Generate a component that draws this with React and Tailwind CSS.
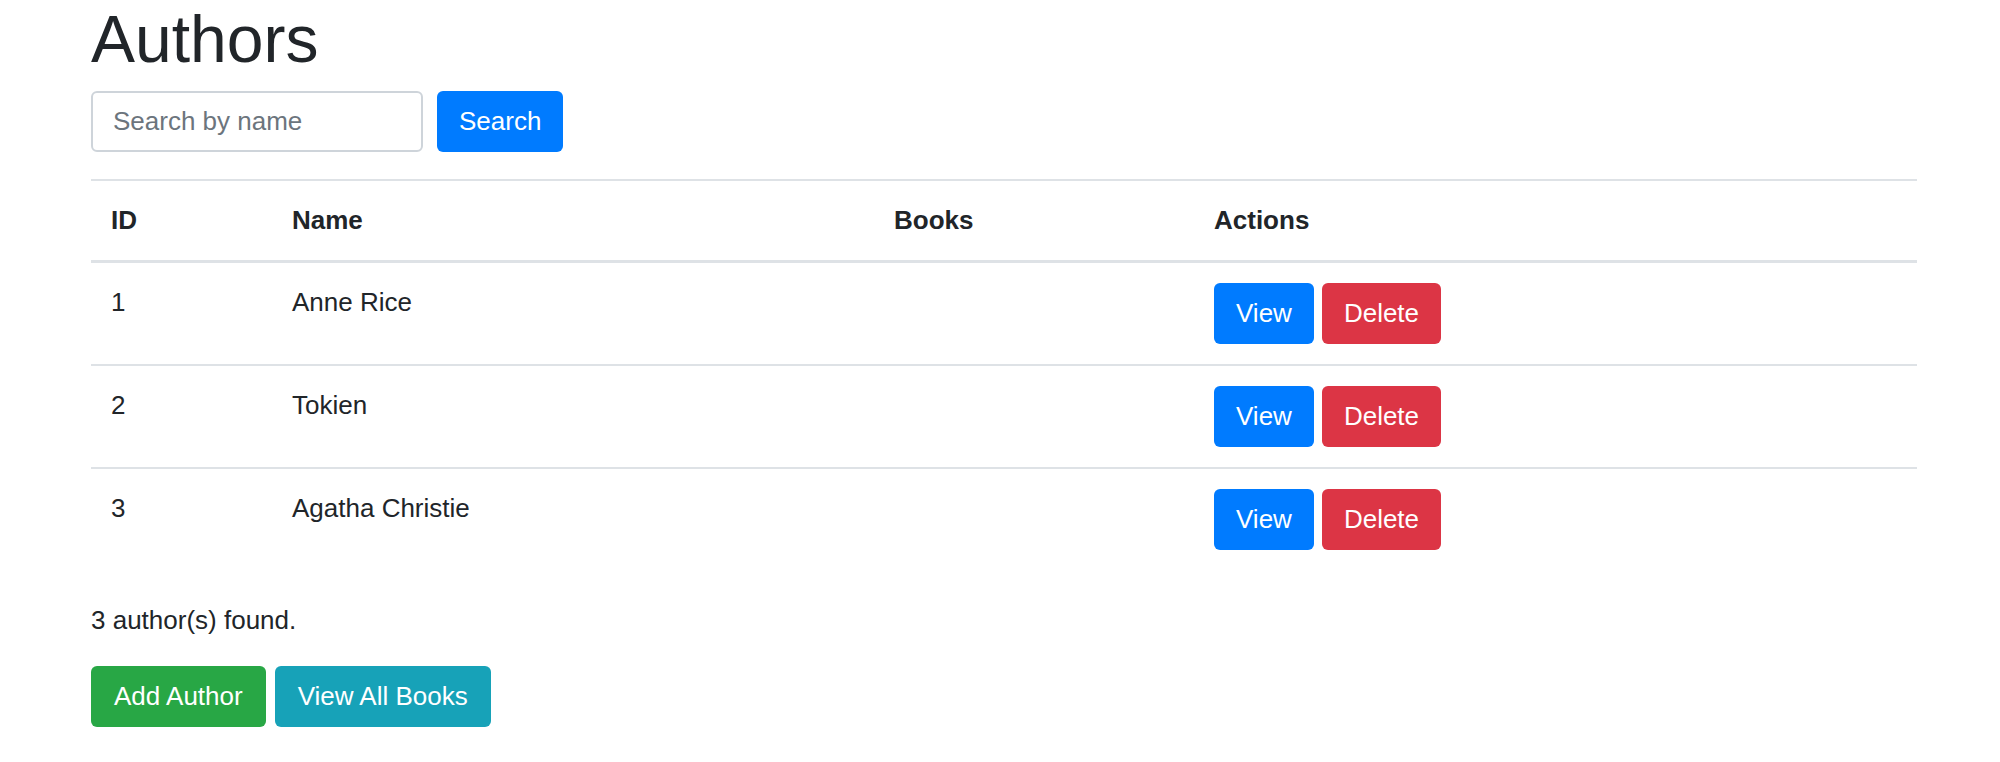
import React from "react";

const authors = [
  { id: 1, name: "Anne Rice" },
  { id: 2, name: "Tokien" },
  { id: 3, name: "Agatha Christie" },
];

const btn =
  "inline-flex items-center h-[61px] px-[21px] border border-transparent rounded-[6px] text-white text-[26px] leading-[39px]";

const AuthorList = () => {
  return (
    <div
      className="min-h-screen bg-white text-[#212529] pl-[91px] pr-[83px]"
      style={{ fontFamily: '"Liberation Sans", Arial, sans-serif' }}
    >
      <h1 className="text-[66px] leading-[78px] font-medium mb-[13px]">Authors</h1>

      <form className="flex items-center gap-[14px]" onSubmit={(e) => e.preventDefault()}>
        <input
          type="text"
          placeholder="Search by name"
          className="w-[332px] h-[61px] px-[20px] border-2 border-[#ced4da] rounded-[6px] text-[26px] placeholder:text-[#6c757d] outline-none"
        />
        <button type="submit" className={`${btn} bg-[#007bff]`}>
          Search
        </button>
      </form>

      <table className="w-full mt-[27px] border-collapse text-[26px] leading-[39px]">
        <thead>
          <tr className="text-left">
            <th className="w-[181px] p-[20px] font-bold border-t-2 border-b-[3px] border-[#dee2e6]">ID</th>
            <th className="w-[602px] p-[20px] font-bold border-t-2 border-b-[3px] border-[#dee2e6]">Name</th>
            <th className="w-[320px] p-[20px] font-bold border-t-2 border-b-[3px] border-[#dee2e6]">Books</th>
            <th className="p-[20px] font-bold border-t-2 border-b-[3px] border-[#dee2e6]">Actions</th>
          </tr>
        </thead>
        <tbody>
          {authors.map((a) => (
            <tr key={a.id}>
              <td className="p-[20px] align-top border-t-2 border-[#dee2e6]">{a.id}</td>
              <td className="p-[20px] align-top border-t-2 border-[#dee2e6]">{a.name}</td>
              <td className="p-[20px] align-top border-t-2 border-[#dee2e6]"></td>
              <td className="p-[20px] align-top border-t-2 border-[#dee2e6]">
                <div className="flex gap-[8px]">
                  <button className={`${btn} bg-[#007bff]`}>View</button>
                  <button className={`${btn} bg-[#dc3545]`}>Delete</button>
                </div>
              </td>
            </tr>
          ))}
        </tbody>
      </table>

      <p className="mt-[31px] mb-[26px] text-[26px] leading-[39px]">{authors.length} author(s) found.</p>

      <div className="flex gap-[9px]">
        <button className={`${btn} !px-[22px] bg-[#28a745]`}>Add Author</button>
        <button className={`${btn} !px-[22px] bg-[#17a2b8]`}>View All Books</button>
      </div>
    </div>
  );
};

export default AuthorList;
